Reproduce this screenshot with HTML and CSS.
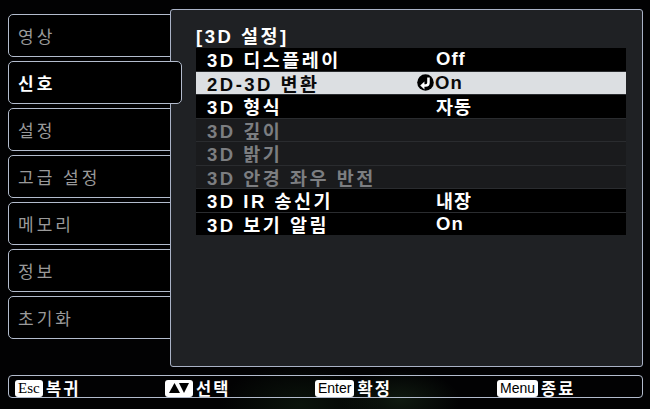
FILE: index.html
```html
<!DOCTYPE html>
<html lang="ko">
<head>
    <meta charset="UTF-8">
    <meta name="viewport" content="width=device-width, initial-scale=1.0">
    <title>3D 설정</title>
    <link rel="stylesheet" href="styles.css">
</head>
<body>

    <div class="screen">
        <div class="main">
            <!-- Left menu tabs -->
            <ul class="tabs">
                <li class="tab">영상</li>
                <li class="tab tab-active">신호</li>
                <li class="tab">설정</li>
                <li class="tab">고급 설정</li>
                <li class="tab">메모리</li>
                <li class="tab">정보</li>
                <li class="tab">초기화</li>
            </ul>

            <!-- Sub menu panel -->
            <section class="panel">
                <h1 class="panel-title">[3D 설정]</h1>
                <div class="menu-list">
                    <div class="row"><span class="row-label">3D 디스플레이</span><span class="row-value">Off</span></div>
                    <div class="row row-selected">
                        <span class="row-label">2D-3D 변환</span>
                        <span class="row-value">
                            <svg class="enter-icon" viewBox="0 0 16 16">
                                <circle cx="8" cy="8" r="7.8" fill="#000"/>
                                <path d="M10.8 3.2 V8.2 Q10.8 10.8 8.2 10.8 H6.6" fill="none" stroke="#fff" stroke-width="2.4"/>
                                <polygon points="3,10.8 7,7 7,14.6" fill="#fff"/>
                            </svg>On
                        </span>
                    </div>
                    <div class="row"><span class="row-label">3D 형식</span><span class="row-value">자동</span></div>
                    <div class="row row-disabled"><span class="row-label">3D 깊이</span></div>
                    <div class="row row-disabled"><span class="row-label">3D 밝기</span></div>
                    <div class="row row-disabled"><span class="row-label">3D 안경 좌우 반전</span></div>
                    <div class="row"><span class="row-label">3D IR 송신기</span><span class="row-value">내장</span></div>
                    <div class="row"><span class="row-label">3D 보기 알림</span><span class="row-value">On</span></div>
                </div>
            </section>
        </div>

        <!-- Bottom help bar -->
        <div class="help-bar">
            <div class="help-item"><span class="key key-serif">Esc</span><span class="help-label">복귀</span></div>
            <div class="help-item">
                <span class="key key-arrows">
                    <svg viewBox="0 0 22 12" width="22" height="12">
                        <polygon points="1,11 6.5,1 12,11" fill="#000"/>
                        <polygon points="11,1 21,1 16,11" fill="#000"/>
                    </svg>
                </span><span class="help-label">선택</span>
            </div>
            <div class="help-item"><span class="key">Enter</span><span class="help-label">확정</span></div>
            <div class="help-item"><span class="key">Menu</span><span class="help-label">종료</span></div>
        </div>
    </div>

</body>
</html>
```

FILE: styles.css
```css
body {
    margin: 0;
    background-color: #000;
    font-family: "Liberation Sans", "Noto Sans CJK KR", sans-serif;
}

.screen {
    width: 650px;
    height: 409px;
    box-sizing: border-box;
    padding: 9px 7px 0 8px;
    background:
        radial-gradient(ellipse 60px 30px at 400px 400px, rgba(40, 70, 40, 0.35), transparent),
        radial-gradient(ellipse 80px 40px at 300px 405px, rgba(30, 60, 30, 0.3), transparent),
        #020203;
}

.main {
    display: flex;
    height: 358px;
}

/* Left tabs */
.tabs {
    list-style: none;
    margin: 0 -12px 0 0;
    padding: 5px 0 0;
    width: 174px;
    display: flex;
    flex-direction: column;
    gap: 4px;
}

.tab {
    height: 43px;
    box-sizing: border-box;
    border: 1px solid #b3bccd;
    border-radius: 5px;
    background-color: #000;
    color: #9a9a9a;
    font-size: 17px;
    letter-spacing: 3px;
    padding-left: 9px;
    display: flex;
    align-items: center;
}

.tab-active {
    color: #fff;
    font-weight: bold;
    position: relative;
    z-index: 2;
}

/* Panel */
.panel {
    position: relative;
    z-index: 1;
    width: 473px;
    height: 358px;
    box-sizing: border-box;
    border: 1px solid #a9b2c6;
    border-radius: 3px;
    background-color: #1f2124;
    padding: 16px 0 0 25px;
}

.panel-title {
    margin: 0;
    font-size: 18.5px;
    line-height: 22px;
    color: #fff;
    font-weight: bold;
    letter-spacing: 2.5px;
}

.menu-list {
    width: 430px;
    display: flex;
    flex-direction: column;
    gap: 1px;
    background-color: #2a2c2f;
}

.row {
    height: 22.5px;
    display: flex;
    align-items: center;
    background-color: #000;
    color: #fff;
    font-size: 18.5px;
    font-weight: bold;
    letter-spacing: 2.5px;
}

.row-label {
    width: 229px;
    padding-left: 11px;
    flex: none;
}

.row-value {
    display: flex;
    align-items: center;
    letter-spacing: 1px;
}

.row-selected {
    background-color: #dcdfe2;
    color: #0a0a0a;
}

.row-disabled {
    background-color: #1a1b1d;
    color: #7c7e81;
}

.enter-icon {
    flex: none;
    width: 17px;
    height: 17px;
    margin-left: -19px;
    margin-right: 1px;
}

/* Bottom help bar */
.help-bar {
    margin-top: 8px;
    height: 23px;
    box-sizing: border-box;
    border: 1px solid #b3bccd;
    border-radius: 4px;
    display: grid;
    grid-template-columns: 150px 150px 182px 1fr;
    align-items: center;
    padding-left: 6px;
}

.help-item {
    display: flex;
    align-items: center;
}

.key {
    background-color: #fff;
    color: #000;
    border-radius: 3px;
    height: 17px;
    padding: 0 3px;
    font-size: 14px;
    display: inline-flex;
    align-items: center;
}

.key-serif {
    font-family: "Liberation Serif", serif;
    font-size: 15px;
    width: 22px;
}

.key-arrows {
    width: 22px;
}

.help-label {
    color: #fff;
    font-weight: bold;
    font-size: 16.5px;
    letter-spacing: 2px;
    margin-left: 3px;
}
```
